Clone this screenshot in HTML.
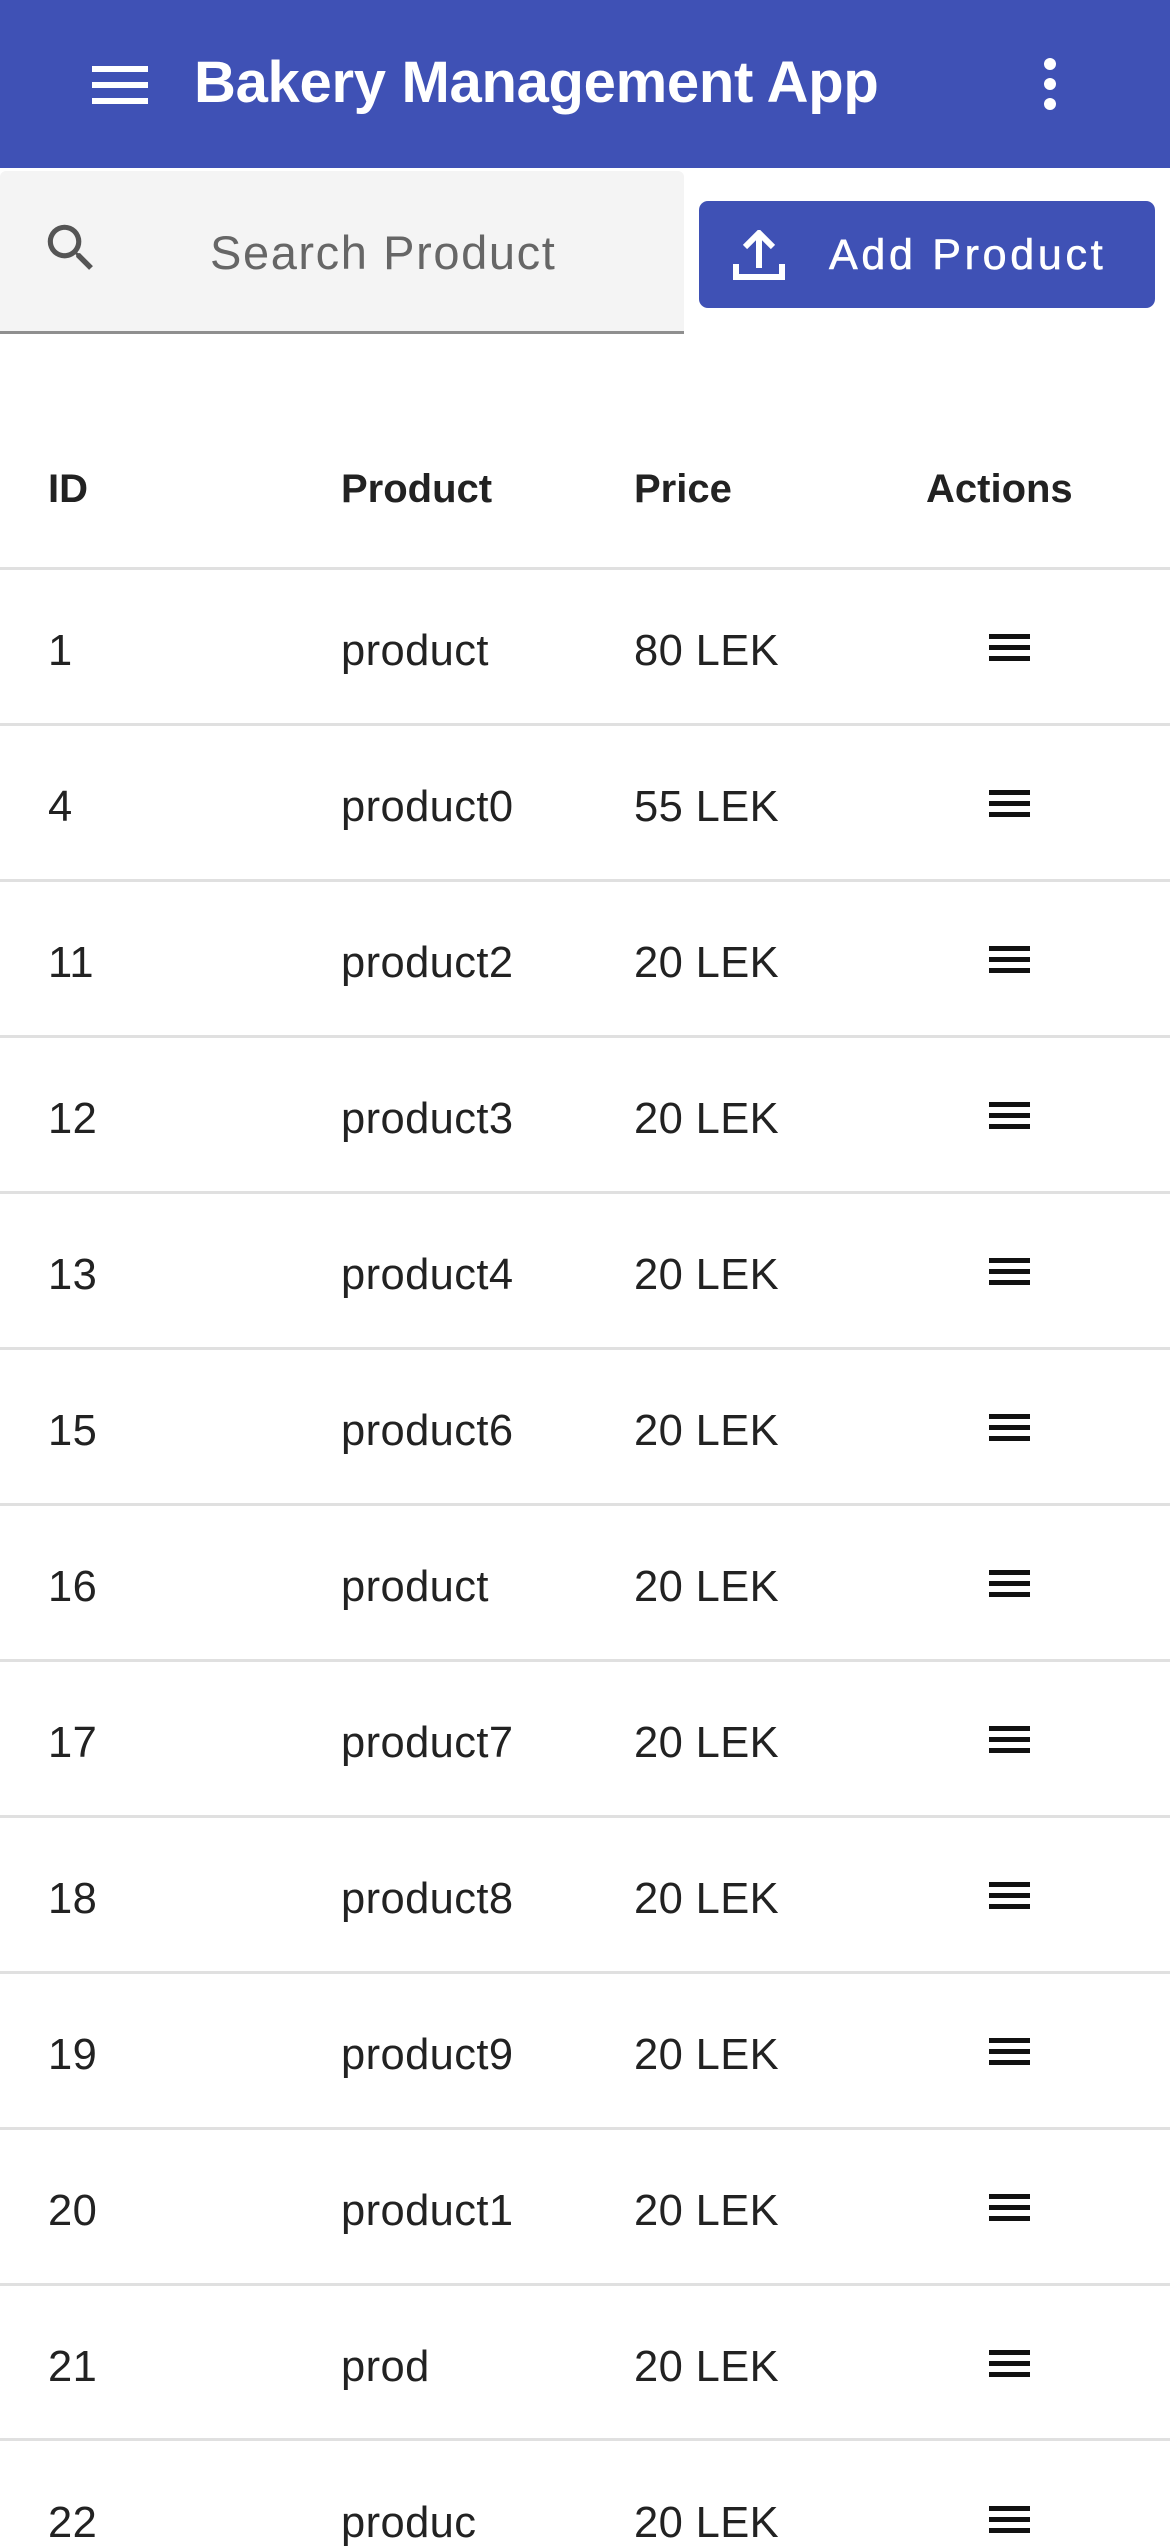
<!DOCTYPE html>
<html><head><meta charset="utf-8"><style>
*{margin:0;padding:0;box-sizing:border-box}
body{width:1170px;height:2532px;overflow:hidden;background:#fff;font-family:"Liberation Sans",Arial,sans-serif;position:relative}
.bar{position:absolute;left:0;top:0;width:1170px;height:168px;background:#3F51B5}
.title{position:absolute;left:194px;top:48px;color:#fff;font-size:58px;font-weight:bold;line-height:70px;letter-spacing:-0.3px}
.search{position:absolute;left:0;top:171px;width:684px;height:163px;background:#f4f4f4;border-bottom:3px solid #8f8f8f;border-radius:6px 6px 0 0}
.ph{position:absolute;left:210px;top:54px;font-size:47px;color:#666;letter-spacing:1.6px}
.btn{position:absolute;left:699px;top:201px;width:456px;height:107px;background:#3F51B5;border-radius:9px}
.btxt{position:absolute;left:130px;top:29px;color:#fff;font-size:43px;letter-spacing:3.7px;line-height:50px;-webkit-text-stroke:0.6px #fff}
.hdr{position:absolute;top:465px;font-size:40px;font-weight:bold;color:#222;line-height:48px}
.line{position:absolute;left:0;width:1170px;height:3px;background:#e0e0e0}
.cell{position:absolute;font-size:43.5px;color:#222;line-height:50px;letter-spacing:0.4px;margin-top:4px}
.menu{position:absolute;left:989px;width:41px;height:27px;border-top:5px solid #111;border-bottom:5px solid #111}
.menu:after{content:"";position:absolute;left:0;top:6px;width:41px;height:5px;background:#111}
</style></head><body>
<div class="bar">
<svg style="position:absolute;left:92px;top:66px" width="56" height="38" viewBox="0 0 56 38"><rect y="0" width="56" height="6" fill="#fff"/><rect y="16" width="56" height="6" fill="#fff"/><rect y="32" width="56" height="6" fill="#fff"/></svg>
<div class="title">Bakery Management App</div>
<svg style="position:absolute;left:1040px;top:58px" width="20" height="52" viewBox="0 0 20 52"><circle cx="10" cy="6" r="6" fill="#fff"/><circle cx="10" cy="26" r="6" fill="#fff"/><circle cx="10" cy="46" r="6" fill="#fff"/></svg>
</div>
<div class="search">
<svg style="position:absolute;left:40px;top:46px" width="62" height="62" viewBox="0 0 24 24"><path fill="#555" d="M15.5 14h-.79l-.28-.27A6.47 6.47 0 0 0 16 9.5 6.5 6.5 0 1 0 9.5 16c1.61 0 3.09-.59 4.23-1.57l.27.28v.79l5 4.99L20.49 19l-4.99-5zm-6 0C7.01 14 5 11.99 5 9.5S7.01 5 9.5 5 14 7.01 14 9.5 11.99 14 9.5 14z"/></svg>
<div class="ph">Search Product</div>
</div>
<div class="btn">
<svg style="position:absolute;left:34px;top:29px" width="52" height="50" viewBox="0 0 52 50"><path d="M26 4 L26 38 M12 17 L26 3 L40 17" stroke="#fff" stroke-width="6" fill="none"/><path d="M3 34 L3 47 L49 47 L49 34" stroke="#fff" stroke-width="6" fill="none"/></svg>
<div class="btxt">Add Product</div>
</div>
<div class="hdr" style="left:48px">ID</div>
<div class="hdr" style="left:341px">Product</div>
<div class="hdr" style="left:634px">Price</div>
<div class="hdr" style="left:926px">Actions</div>
<div class="line" style="top:567px"></div>

<div class="line" style="top:723px"></div>
<div class="line" style="top:879px"></div>
<div class="line" style="top:1035px"></div>
<div class="line" style="top:1191px"></div>
<div class="line" style="top:1347px"></div>
<div class="line" style="top:1503px"></div>
<div class="line" style="top:1659px"></div>
<div class="line" style="top:1815px"></div>
<div class="line" style="top:1971px"></div>
<div class="line" style="top:2127px"></div>
<div class="line" style="top:2283px"></div>
<div class="line" style="top:2438px"></div>

<div class="cell" style="left:48px;top:622px">1</div><div class="cell" style="left:341px;top:622px">product</div><div class="cell" style="left:634px;top:622px">80 LEK</div><div class="menu" style="top:634px"></div>
<div class="cell" style="left:48px;top:778px">4</div><div class="cell" style="left:341px;top:778px">product0</div><div class="cell" style="left:634px;top:778px">55 LEK</div><div class="menu" style="top:790px"></div>
<div class="cell" style="left:48px;top:934px">11</div><div class="cell" style="left:341px;top:934px">product2</div><div class="cell" style="left:634px;top:934px">20 LEK</div><div class="menu" style="top:946px"></div>
<div class="cell" style="left:48px;top:1090px">12</div><div class="cell" style="left:341px;top:1090px">product3</div><div class="cell" style="left:634px;top:1090px">20 LEK</div><div class="menu" style="top:1102px"></div>
<div class="cell" style="left:48px;top:1246px">13</div><div class="cell" style="left:341px;top:1246px">product4</div><div class="cell" style="left:634px;top:1246px">20 LEK</div><div class="menu" style="top:1258px"></div>
<div class="cell" style="left:48px;top:1402px">15</div><div class="cell" style="left:341px;top:1402px">product6</div><div class="cell" style="left:634px;top:1402px">20 LEK</div><div class="menu" style="top:1414px"></div>
<div class="cell" style="left:48px;top:1558px">16</div><div class="cell" style="left:341px;top:1558px">product</div><div class="cell" style="left:634px;top:1558px">20 LEK</div><div class="menu" style="top:1570px"></div>
<div class="cell" style="left:48px;top:1714px">17</div><div class="cell" style="left:341px;top:1714px">product7</div><div class="cell" style="left:634px;top:1714px">20 LEK</div><div class="menu" style="top:1726px"></div>
<div class="cell" style="left:48px;top:1870px">18</div><div class="cell" style="left:341px;top:1870px">product8</div><div class="cell" style="left:634px;top:1870px">20 LEK</div><div class="menu" style="top:1882px"></div>
<div class="cell" style="left:48px;top:2026px">19</div><div class="cell" style="left:341px;top:2026px">product9</div><div class="cell" style="left:634px;top:2026px">20 LEK</div><div class="menu" style="top:2038px"></div>
<div class="cell" style="left:48px;top:2182px">20</div><div class="cell" style="left:341px;top:2182px">product1</div><div class="cell" style="left:634px;top:2182px">20 LEK</div><div class="menu" style="top:2194px"></div>
<div class="cell" style="left:48px;top:2338px">21</div><div class="cell" style="left:341px;top:2338px">prod</div><div class="cell" style="left:634px;top:2338px">20 LEK</div><div class="menu" style="top:2350px"></div>
<div class="cell" style="left:48px;top:2494px">22</div><div class="cell" style="left:341px;top:2494px">produc</div><div class="cell" style="left:634px;top:2494px">20 LEK</div><div class="menu" style="top:2506px"></div>
</body></html>
